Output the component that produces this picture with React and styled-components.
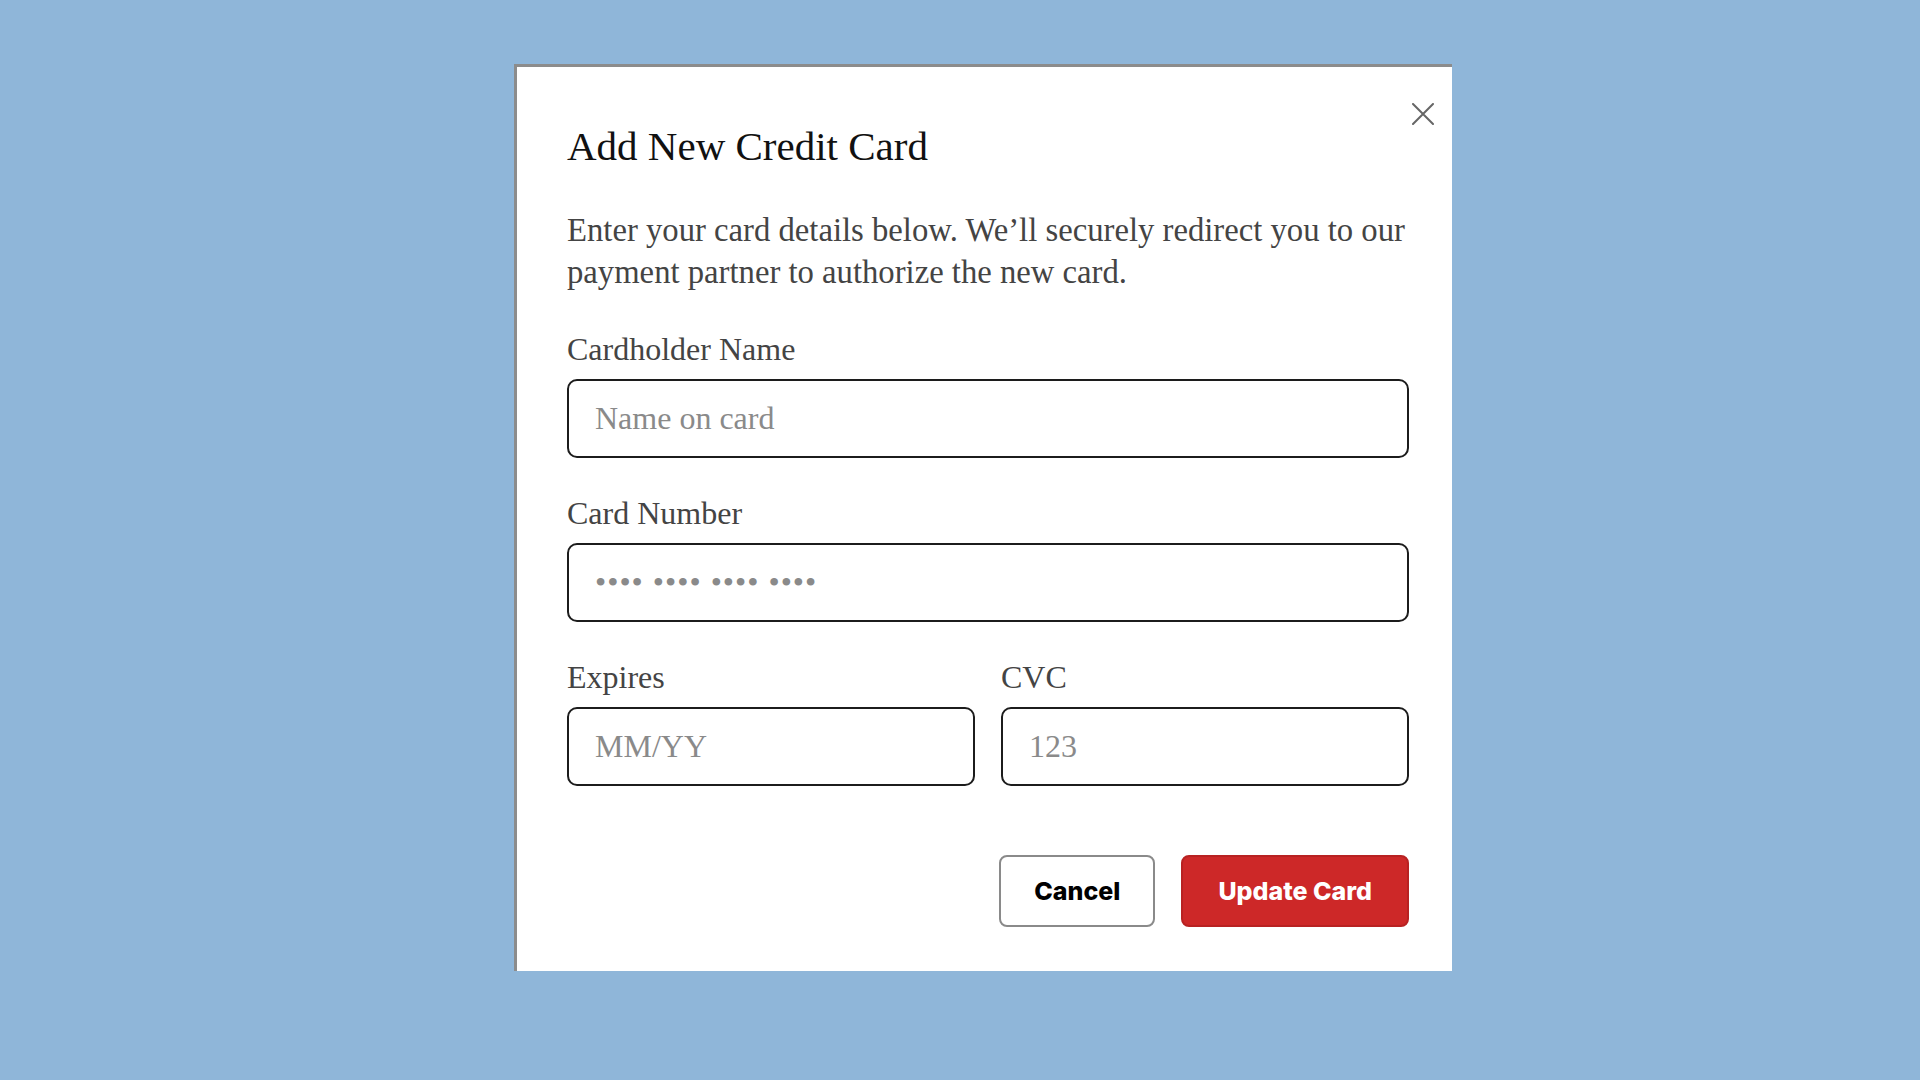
import { createGlobalStyle } from "styled-components";
import styled from "styled-components";

const GlobalStyle = createGlobalStyle`
    html, body {
        margin: 0;
        padding: 0;
        background-color: #8fb6d9;
    }
    * {
        box-sizing: border-box;
    }
`;

function CloseIcon() {
    return (
        <svg width="22" height="22" viewBox="0 0 22 22" fill="none">
            <path d="M1 1L21 21M21 1L1 21" stroke="#666" strokeWidth="2" strokeLinecap="round" />
        </svg>
    );
}

function Field({ label, placeholder, dots }) {
    return (
        <FieldGroup>
            <Label>{label}</Label>
            <Input placeholder={placeholder} $dots={dots} />
        </FieldGroup>
    );
}

export default function App() {
    return (
        <>
            <GlobalStyle />
            <Overlay>
                <Modal role="dialog">
                    <CloseButton aria-label="Close">
                        <CloseIcon />
                    </CloseButton>
                    <Title>Add New Credit Card</Title>
                    <Description>
                        Enter your card details below. We’ll securely redirect you to our payment partner to authorize the new card.
                    </Description>
                    <Form>
                        <Field label="Cardholder Name" placeholder="Name on card" />
                        <Field label="Card Number" placeholder="•••• •••• •••• ••••" dots />
                        <Row>
                            <Field label="Expires" placeholder="MM/YY" />
                            <Field label="CVC" placeholder="123" />
                        </Row>
                    </Form>
                    <Actions>
                        <Button>Cancel</Button>
                        <Button $primary>Update Card</Button>
                    </Actions>
                </Modal>
            </Overlay>
        </>
    );
}

const Overlay = styled.div`
    min-height: 100vh;
    display: flex;
    align-items: flex-start;
    padding: 64px 0 0 514px;
`;

const Modal = styled.div`
    position: relative;
    width: 938px;
    height: 907px;
    background-color: #fff;
    border-top: 3px solid #8c8c8c;
    border-left: 3px solid #8c8c8c;
    padding: 55px 43px 0 50px;
    font-family: "Liberation Serif", "Times New Roman", serif;
`;

const CloseButton = styled.button`
    position: absolute;
    top: 36px;
    right: 18px;
    width: 22px;
    height: 22px;
    padding: 0;
    border: none;
    background: none;
    display: flex;
    cursor: pointer;
`;

const Title = styled.h2`
    margin: 0;
    font-size: 41px;
    line-height: 49px;
    font-weight: 400;
    color: #111;
`;

const Description = styled.p`
    margin: 38px 0 0;
    font-size: 32.7px;
    line-height: 42px;
    color: #444;
`;

const Form = styled.div`
    margin-top: 35px;
    display: flex;
    flex-direction: column;
    gap: 34px;
`;

const FieldGroup = styled.label`
    display: flex;
    flex-direction: column;
    gap: 9px;
    flex: 1;
`;

const Label = styled.span`
    font-size: 32px;
    line-height: 42px;
    color: #444;
`;

const Input = styled.input`
    height: 79px;
    width: 100%;
    border: 2px solid #1c1c1c;
    border-radius: 10px;
    padding: 0 26px;
    font-family: "Liberation Serif", "Times New Roman", serif;
    font-size: 32px;
    color: #222;
    outline: none;
    &::placeholder {
        color: #8a8a8a;
        letter-spacing: ${p => (p.$dots ? "1px" : "0")};
    }
`;

const Row = styled.div`
    display: flex;
    gap: 26px;
`;

const Actions = styled.div`
    margin-top: 69px;
    display: flex;
    justify-content: flex-end;
    gap: 26px;
`;

const Button = styled.button`
    height: 72px;
    padding: 0 ${p => (p.$primary ? "35px" : "33px")};
    border-radius: 8px;
    border: 2px solid ${p => (p.$primary ? "#b82222" : "#8a8a8a")};
    background-color: ${p => (p.$primary ? "#cd2828" : "#fff")};
    color: ${p => (p.$primary ? "#fff" : "#000")};
    font-family: Inter, "Liberation Sans", sans-serif;
    font-size: 25px;
    font-weight: 800;
    cursor: pointer;
`;
